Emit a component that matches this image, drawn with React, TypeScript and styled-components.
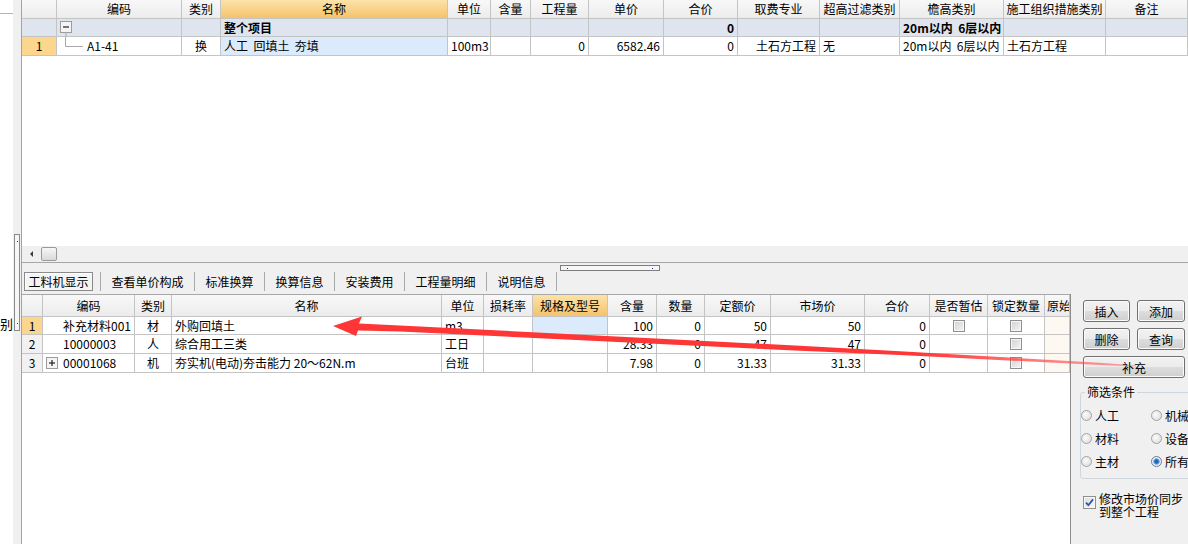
import React from "react";
import styled, { createGlobalStyle } from "styled-components";

const FONT = `"Noto Sans CJK SC", "Noto Sans", sans-serif`;
const LINE = "#c4c4c4";

const Global = createGlobalStyle`
  html, body { margin: 0; padding: 0; background: #fff; }
  body { font-family: ${FONT}; font-size: 12px; color: #000; }
  #root { width: 1188px; height: 544px; }
`;

const Screen = styled.div`
  position: relative;
  display: flex;
  width: 1188px;
  height: 544px;
  overflow: hidden;
  font-family: ${FONT};
  font-size: 12px;
  line-height: 1;
  color: #000;
  background: #fff;
`;

/* ---------- left edge ---------- */
const LeftStub = styled.div`
  width: 13px;
  flex-shrink: 0;
  display: flex;
  flex-direction: column;
  background: #fff;
`;
const StubLine = styled.div`
  height: 13px;
  border-bottom: 1px solid #b4b4b4;
`;
const CutLabel = styled.div`
  margin-top: 302px;
  width: 13px;
  height: 15px;
  display: flex;
  justify-content: flex-end;
  align-items: center;
  overflow: hidden;
  white-space: nowrap;
  font-size: 13px;
`;
const SideStrip = styled.div`
  width: 8px;
  flex-shrink: 0;
  background: #f0f0f0;
  border-right: 1px solid #a3a3a3;
`;
const VHandle = styled.div`
  box-sizing: border-box;
  margin: 234px 0 0 1px;
  width: 6px;
  height: 97px;
  border: 1px solid #8a8a8a;
  background: #f6f6f6;
  display: flex;
  flex-direction: column;
  justify-content: space-between;
  align-items: center;
  padding: 6px 0;
`;
const HandleDot = styled.span`
  width: 1px;
  height: 1px;
  background: #1c2f9c;
`;

/* ---------- main ---------- */
const Main = styled.div`
  flex: 1;
  min-width: 0;
  display: flex;
  flex-direction: column;
`;
const TopPane = styled.div`
  height: 246px;
  background: #fff;
  overflow: hidden;
`;

const GridRow = styled.div<{ $cols: string; $h: number }>`
  display: grid;
  grid-template-columns: ${(p) => p.$cols};
  height: ${(p) => p.$h}px;
`;

type Align = "left" | "center" | "right";

const Cell = styled.div<{ $align?: Align; $bg?: string; $bold?: boolean; $pl?: number }>`
  box-sizing: border-box;
  display: flex;
  align-items: center;
  justify-content: ${(p) =>
    p.$align === "right" ? "flex-end" : p.$align === "center" ? "center" : "flex-start"};
  padding: 0 3px 0 ${(p) => (p.$pl ?? 3)}px;
  border-right: 1px solid ${LINE};
  border-bottom: 1px solid ${LINE};
  background: ${(p) => p.$bg ?? "#fff"};
  font-weight: ${(p) => (p.$bold ? 700 : 400)};
  white-space: pre;
  overflow: hidden;
`;

const HeadCell = styled.div<{ $hot?: boolean; $left?: boolean }>`
  box-sizing: border-box;
  display: flex;
  align-items: center;
  justify-content: ${(p) => (p.$left ? "flex-start" : "center")};
  padding: 0 2px;
  border-right: 1px solid ${LINE};
  border-bottom: 1px solid ${LINE};
  background: ${(p) =>
    p.$hot ? "linear-gradient(#fce3a9, #f4c36c)" : "linear-gradient(#f8f8f8, #ececec)"};
  white-space: nowrap;
  overflow: hidden;
`;

const Glyph = styled.svg`
  flex-shrink: 0;
  display: block;
`;

/* ---------- scrollbar + splitter ---------- */
const HScroll = styled.div`
  height: 16px;
  background: #f0f0f0;
  border-bottom: 1px solid #a6a6a6;
  display: flex;
  align-items: center;
`;
const ScrollArrow = styled.div`
  width: 19px;
  height: 16px;
  display: flex;
  align-items: center;
  justify-content: center;
`;
const ArrowTri = styled.span`
  width: 0;
  height: 0;
  border-top: 3px solid transparent;
  border-bottom: 3px solid transparent;
  border-right: 3px solid #3a3a3a;
`;
const ScrollThumb = styled.div`
  box-sizing: border-box;
  width: 16px;
  height: 14px;
  border: 1px solid #9a9a9a;
  border-radius: 2px;
  background: linear-gradient(#f6f6f6, #dadada);
`;
const SplitRow = styled.div`
  height: 8px;
  background: #f0f0f0;
  display: flex;
  justify-content: center;
  align-items: flex-start;
`;
const HHandle = styled.div`
  box-sizing: border-box;
  margin: 2px 0 0 10px;
  width: 100px;
  height: 6px;
  border: 1px solid #7d7d7d;
  background: #f7f7f7;
  display: flex;
  justify-content: space-between;
  align-items: center;
  padding: 0 6px;
`;

/* ---------- tabs ---------- */
const TabBar = styled.div`
  height: 23px;
  background: #f0f0f0;
  display: flex;
  align-items: flex-start;
  padding: 1px 0 0 2px;
  box-sizing: border-box;
`;
const ActiveTab = styled.div`
  box-sizing: border-box;
  width: 69px;
  height: 19px;
  margin-right: 7px;
  border: 1px solid #8a8a8a;
  box-shadow: inset 1px 1px 0 #ffffff;
  background: #f4f4f4;
  display: flex;
  align-items: center;
  justify-content: center;
  font-size: 12px;
`;
const Tab = styled.div`
  height: 19px;
  padding: 0 10.5px;
  display: flex;
  align-items: center;
  white-space: nowrap;
`;
const TabSep = styled.span`
  width: 1px;
  height: 19px;
  background: #a9a9a9;
`;

/* ---------- bottom ---------- */
const BottomArea = styled.div`
  flex: 1;
  display: flex;
  min-height: 0;
`;
const BottomGrid = styled.div`
  width: 1048px;
  flex-shrink: 0;
  border-top: 1px solid #a8a8a8;
  background: #fff;
`;
const TableCheck = styled.span`
  box-sizing: border-box;
  width: 12px;
  height: 12px;
  border: 1px solid #8e8f8f;
  box-shadow: inset 0 0 0 1px #f6f6f6;
  background: linear-gradient(135deg, #cfd1d3, #f5f5f5);
`;

const RightPanel = styled.div`
  flex: 1;
  min-width: 0;
  overflow: hidden;
  background: #f0f0f0;
  border-left: 1px solid #8c8c8c;
  padding: 6px 0 0 12px;
`;
const ButtonGrid = styled.div`
  display: grid;
  grid-template-columns: 47px 48px;
  grid-auto-rows: 22px;
  column-gap: 7px;
  row-gap: 6px;
`;
const PanelButton = styled.button<{ $wide?: boolean }>`
  grid-column: ${(p) => (p.$wide ? "1 / span 2" : "auto")};
  height: 22px;
  padding: 2px 0 0;
  margin: 0;
  border: 1px solid #707070;
  border-radius: 3px;
  background: linear-gradient(#f2f2f2 0%, #ebebeb 50%, #dddddd 51%, #cfcfcf 100%);
  box-shadow: inset 0 0 0 1px #fbfbfb;
  font-family: ${FONT};
  font-size: 12px;
  line-height: 1;
  color: #000;
`;
const FilterBox = styled.fieldset`
  margin: 6px -30px 0 -3px;
  padding: 4px 0 5px 0;
  min-width: 0;
  border: 1px solid #d0d7dc;
  border-radius: 3px;
`;
const FilterLegend = styled.legend`
  margin-left: 4px;
  padding: 0 2px;
  line-height: 16px;
  font-size: 12px;
`;
const RadioGrid = styled.div`
  display: grid;
  grid-template-columns: 70px auto;
  grid-auto-rows: 23px;
  align-items: center;
`;
const RadioItem = styled.label`
  display: flex;
  align-items: center;
  gap: 3px;
  white-space: nowrap;
`;
const RadioDot = styled.span<{ $on?: boolean }>`
  box-sizing: border-box;
  width: 11px;
  height: 11px;
  border-radius: 50%;
  border: 1px solid ${(p) => (p.$on ? "#6a7d95" : "#a3a3a3")};
  background: ${(p) =>
    p.$on
      ? "radial-gradient(circle, #1b58b0 0, #2f78d0 2px, #8fb6e6 3px, #e9eef4 3.6px, #f6f6f6 100%)"
      : "radial-gradient(circle at 40% 40%, #fbfbfb, #d8d8d8)"};
`;
const SyncRow = styled.label`
  margin-top: 13px;
  display: flex;
  align-items: flex-start;
  gap: 3px;
  line-height: 13px;
`;
const CheckedBox = styled.span`
  box-sizing: border-box;
  margin-top: 4px;
  width: 13px;
  height: 13px;
  flex-shrink: 0;
  border: 1px solid #8e8f8f;
  background: linear-gradient(135deg, #d9dde2, #f7f7f7);
  box-shadow: inset 0 0 0 1px #f8f8f8;
  display: flex;
  align-items: center;
  justify-content: center;
`;

/* ---------- arrow overlay ---------- */
const Overlay = styled.svg`
  position: absolute;
  left: 0;
  top: 0;
  pointer-events: none;
`;

/* ---------- data ---------- */
const TOP_COLS = "35px 125px 39px 227px 43px 40px 58px 75px 74px 82px 80px 104px 102px 82px";
const BOT_COLS = "21px 92px 37px 270px 42px 49px 75px 49px 48px 66px 94px 65px 58px 57px 25px";

const ORANGE = "#fdd68d";
const BLUE = "#dcebfb";
const GROUP = "#dfe5ee";
const ROWNUM = "#f1f1f1";
const PEACH = "#fdf8f1";

type Spec = { t?: React.ReactNode; a?: Align; bg?: string; b?: boolean; pl?: number };

const TOP_HEAD = [
  "", "编码", "类别", "名称", "单位", "含量", "工程量", "单价", "合价",
  "取费专业", "超高过滤类别", "檐高类别", "施工组织措施类别", "备注",
];

const TreeTop = () => (
  <Glyph width="14" height="18" viewBox="0 0 14 18">
    <rect x="0.5" y="2.5" width="11" height="11" fill="#f4f4f4" stroke="#9c9c9c" />
    <line x1="3" y1="8" x2="9" y2="8" stroke="#202020" strokeWidth="1.2" />
    <line x1="6" y1="13.5" x2="6" y2="18" stroke="#a8a8a8" />
  </Glyph>
);
const TreeBranch = () => (
  <Glyph width="27" height="19" viewBox="0 0 27 19">
    <path d="M5.5 0 V9.5 H23" fill="none" stroke="#a8a8a8" />
  </Glyph>
);
const PlusBox = () => (
  <Glyph width="17" height="19" viewBox="0 0 17 19">
    <rect x="0.5" y="3.5" width="11" height="11" fill="#f4f4f4" stroke="#9c9c9c" />
    <line x1="3" y1="9" x2="9" y2="9" stroke="#202020" strokeWidth="1.2" />
    <line x1="6" y1="6" x2="6" y2="12" stroke="#202020" strokeWidth="1.2" />
  </Glyph>
);

const TOP_ROWS: { h: number; cells: Spec[] }[] = [
  {
    h: 18,
    cells: [
      { bg: GROUP },
      { t: <TreeTop />, bg: GROUP },
      { bg: GROUP },
      { t: "整个项目", b: true, bg: GROUP },
      { bg: GROUP }, { bg: GROUP }, { bg: GROUP }, { bg: GROUP },
      { t: "0", b: true, a: "right", bg: GROUP },
      { bg: GROUP }, { bg: GROUP },
      { t: "20m以内  6层以内", b: true, bg: GROUP },
      { bg: GROUP }, { bg: GROUP },
    ],
  },
  {
    h: 19,
    cells: [
      { t: "1", a: "center", bg: ORANGE },
      { t: (<><TreeBranch />A1-41</>), pl: 3 },
      { t: "换", a: "center" },
      { t: "人工  回填土  夯填", bg: BLUE },
      { t: "100m3" },
      {},
      { t: "0", a: "right" },
      { t: "6582.46", a: "right" },
      { t: "0", a: "right" },
      { t: "土石方工程", a: "right" },
      { t: "无" },
      { t: "20m以内  6层以内" },
      { t: "土石方工程" },
      {},
    ],
  },
];

const BOT_HEAD = [
  "", "编码", "类别", "名称", "单位", "损耗率", "规格及型号", "含量", "数量",
  "定额价", "市场价", "合价", "是否暂估", "锁定数量", "原始",
];

const check = <TableCheck />;

const BOT_ROWS: { h: number; cells: Spec[] }[] = [
  {
    h: 18,
    cells: [
      { t: "1", a: "center", bg: ORANGE },
      { t: "补充材料001", pl: 20 },
      { t: "材", a: "center" },
      { t: "外购回填土" },
      { t: "m3" },
      {},
      { bg: BLUE },
      { t: "100", a: "right" },
      { t: "0", a: "right" },
      { t: "50", a: "right" },
      { t: "50", a: "right" },
      { t: "0", a: "right" },
      { t: check, a: "center" },
      { t: check, a: "center" },
      { bg: PEACH },
    ],
  },
  {
    h: 19,
    cells: [
      { t: "2", a: "center", bg: ROWNUM },
      { t: "10000003", pl: 20 },
      { t: "人", a: "center" },
      { t: "综合用工三类" },
      { t: "工日" },
      {},
      {},
      { t: "28.33", a: "right" },
      { t: "0", a: "right" },
      { t: "47", a: "right" },
      { t: "47", a: "right" },
      { t: "0", a: "right" },
      {},
      { t: check, a: "center" },
      { bg: PEACH },
    ],
  },
  {
    h: 19,
    cells: [
      { t: "3", a: "center", bg: ROWNUM },
      { t: (<><PlusBox />00001068</>), pl: 3 },
      { t: "机", a: "center" },
      { t: "夯实机(电动)夯击能力 20～62N.m" },
      { t: "台班" },
      {},
      {},
      { t: "7.98", a: "right" },
      { t: "0", a: "right" },
      { t: "31.33", a: "right" },
      { t: "31.33", a: "right" },
      { t: "0", a: "right" },
      {},
      { t: check, a: "center" },
      { bg: PEACH },
    ],
  },
];

const TABS = ["查看单价构成", "标准换算", "换算信息", "安装费用", "工程量明细", "说明信息"];

const RADIOS: { label: string; on?: boolean }[] = [
  { label: "人工" },
  { label: "机械" },
  { label: "材料" },
  { label: "设备" },
  { label: "主材" },
  { label: "所有", on: true },
];

const renderRow = (cols: string, h: number, cells: Spec[], key: React.Key) => (
  <GridRow key={key} $cols={cols} $h={h}>
    {cells.map((c, i) => (
      <Cell key={i} $align={c.a} $bg={c.bg} $bold={c.b} $pl={c.pl}>
        {c.t}
      </Cell>
    ))}
  </GridRow>
);

const RedArrow = () => (
  <Overlay width="1188" height="544" viewBox="0 0 1188 544">
    <defs>
      <linearGradient id="arrowFade" gradientUnits="userSpaceOnUse" x1="333" y1="0" x2="1140" y2="0">
        <stop offset="0" stopColor="#ff3636" stopOpacity="1" />
        <stop offset="0.72" stopColor="#ff3636" stopOpacity="1" />
        <stop offset="1" stopColor="#ff4a4a" stopOpacity="0.45" />
      </linearGradient>
    </defs>
    <polygon
      fill="url(#arrowFade)"
      points="333,326 362,316.5 359,323.5 400,325.5 800,345.8 900,351.3 1100,362.8 1136,365.4 1136,366.4 1100,365 900,355 800,350.8 400,331.5 358,330.6 356,336"
    />
  </Overlay>
);

export default function App() {
  return (
    <>
      <Global />
      <Screen>
        <LeftStub>
          <StubLine />
          <CutLabel>
            <span>类别</span>
          </CutLabel>
        </LeftStub>
        <SideStrip>
          <VHandle>
            <HandleDot />
            <HandleDot />
          </VHandle>
        </SideStrip>
        <Main>
          <TopPane>
            <GridRow $cols={TOP_COLS} $h={19}>
              {TOP_HEAD.map((h, i) => (
                <HeadCell key={i} $hot={h === "名称"}>
                  {h}
                </HeadCell>
              ))}
            </GridRow>
            {TOP_ROWS.map((r, i) => renderRow(TOP_COLS, r.h, r.cells, i))}
          </TopPane>
          <HScroll>
            <ScrollArrow>
              <ArrowTri />
            </ScrollArrow>
            <ScrollThumb />
          </HScroll>
          <SplitRow>
            <HHandle>
              <HandleDot />
              <HandleDot />
            </HHandle>
          </SplitRow>
          <TabBar>
            <ActiveTab>工料机显示</ActiveTab>
            <TabSep />
            {TABS.map((t) => (
              <React.Fragment key={t}>
                <Tab>{t}</Tab>
                <TabSep />
              </React.Fragment>
            ))}
          </TabBar>
          <BottomArea>
            <BottomGrid>
              <GridRow $cols={BOT_COLS} $h={22}>
                {BOT_HEAD.map((h, i) => (
                  <HeadCell key={i} $hot={h === "规格及型号"} $left={h === "原始"}>
                    {h}
                  </HeadCell>
                ))}
              </GridRow>
              {BOT_ROWS.map((r, i) => renderRow(BOT_COLS, r.h, r.cells, i))}
            </BottomGrid>
            <RightPanel>
              <ButtonGrid>
                <PanelButton>插入</PanelButton>
                <PanelButton>添加</PanelButton>
                <PanelButton>删除</PanelButton>
                <PanelButton>查询</PanelButton>
                <PanelButton $wide>补充</PanelButton>
              </ButtonGrid>
              <FilterBox>
                <FilterLegend>筛选条件</FilterLegend>
                <RadioGrid>
                  {RADIOS.map((r) => (
                    <RadioItem key={r.label}>
                      <RadioDot $on={r.on} />
                      {r.label}
                    </RadioItem>
                  ))}
                </RadioGrid>
              </FilterBox>
              <SyncRow>
                <CheckedBox>
                  <svg width="9" height="9" viewBox="0 0 9 9">
                    <path d="M1 4.6 L3.4 7.2 L8 1.4" fill="none" stroke="#2c57a8" strokeWidth="1.8" />
                  </svg>
                </CheckedBox>
                <span>
                  修改市场价同步
                  <br />
                  到整个工程
                </span>
              </SyncRow>
            </RightPanel>
          </BottomArea>
        </Main>
        <RedArrow />
      </Screen>
    </>
  );
}
